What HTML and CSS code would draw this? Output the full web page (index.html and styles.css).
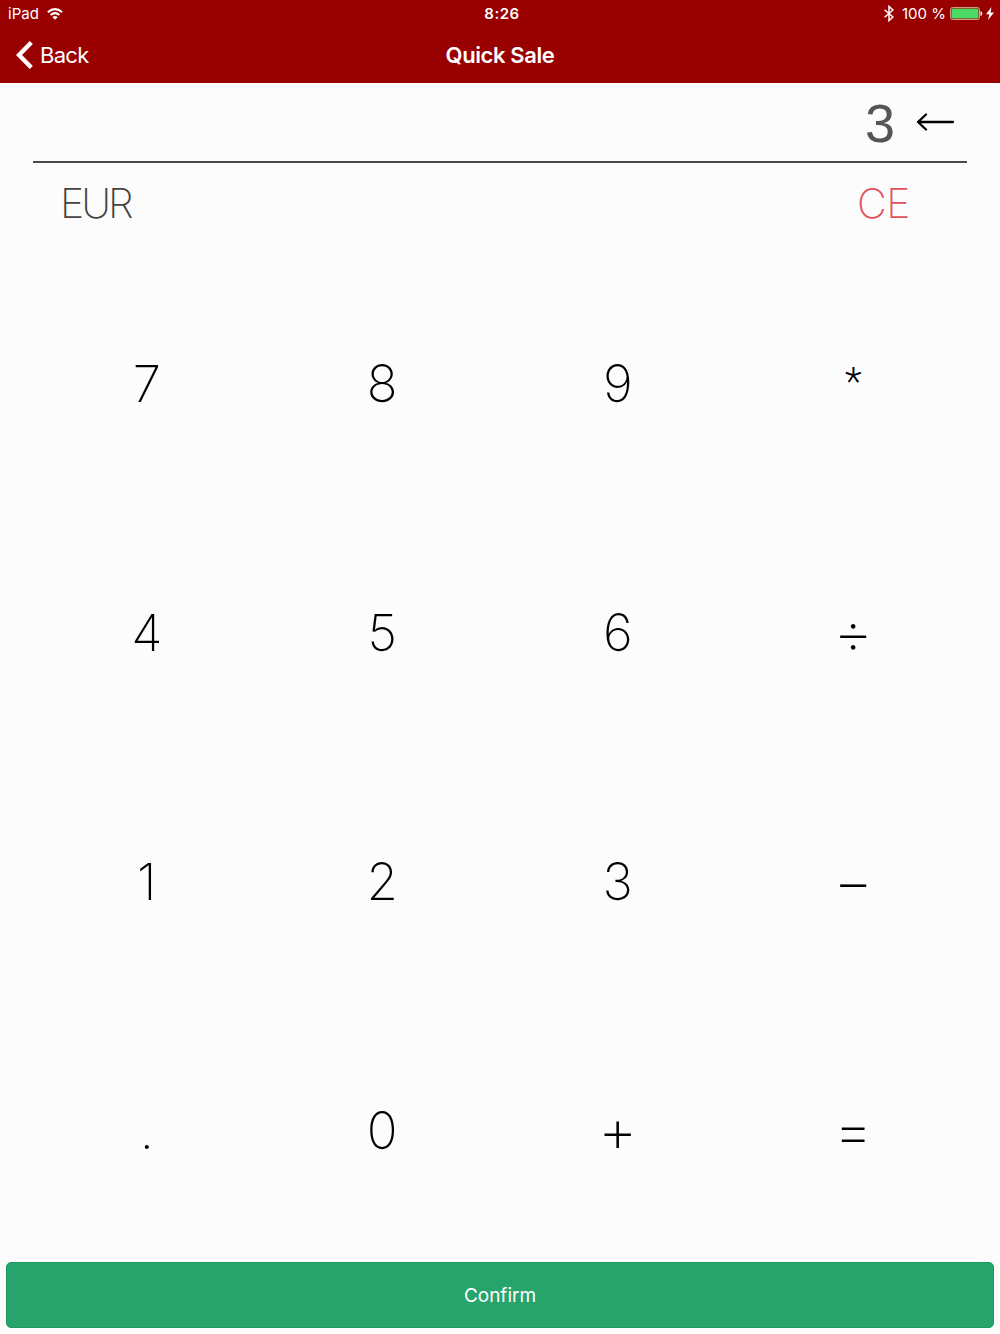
FILE: index.html
```
<!DOCTYPE html>
<html lang="en">
<head>
  <meta charset="UTF-8">
  <meta name="viewport" content="width=device-width, initial-scale=1.0">
  <title>Quick Sale</title>
  <link rel="stylesheet" href="styles.css">
</head>
<body>
  <header>
    <div class="status">
      <div class="status-left">
        <span class="device">iPad</span>
        <svg class="wifi" width="16" height="12" viewBox="0 0 16 12" fill="none" stroke="#fff" stroke-width="2">
          <path d="M0.8 4.3Q8-2 15.2 4.3"/>
          <path d="M3.6 7Q8 3.2 12.4 7"/>
          <path d="M8 11.8L5.4 9.2Q8 7 10.6 9.2Z" fill="#fff" stroke="none"/>
        </svg>
      </div>
      <div class="clock">8:26</div>
      <div class="status-right">
        <svg class="bluetooth" width="10" height="17" viewBox="0 0 10 17" fill="none" stroke="#fff" stroke-width="1.5">
          <path d="M0.6 4.7L9 12L5 15.6V1.4L9 5L0.6 12.3"/>
        </svg>
        <span class="percent">100 %</span>
        <svg class="battery" width="33" height="13" viewBox="0 0 33 13">
          <rect x="0.5" y="0.5" width="29" height="12" rx="2" fill="none" stroke="#d79a8a"/>
          <rect x="1.5" y="1.5" width="27" height="10" rx="1" fill="#4cd964"/>
          <path d="M30.5 4Q32.3 4.5 32.3 6.5T30.5 9Z" fill="#fff"/>
        </svg>
        <svg class="bolt" width="8" height="13" viewBox="0 0 8 13">
          <path d="M5.5 0L0 7.3H3.4L2 13L8 5.4H4.5Z" fill="#fff"/>
        </svg>
      </div>
    </div>
    <nav>
      <a class="back" href="#">
        <svg width="17" height="28" viewBox="0 0 17 28" fill="none" stroke="#fff" stroke-width="4.4">
          <path d="M15.3 1.5L3 14L15.3 26.5"/>
        </svg>
        <span>Back</span>
      </a>
      <h1>Quick Sale</h1>
    </nav>
  </header>

  <div class="display">
    <span class="amount">3</span>
    <svg class="erase" width="39" height="18" viewBox="0 0 39 18" fill="none" stroke="#000" stroke-width="2.3" stroke-linecap="round" stroke-linejoin="round">
      <path d="M37 9H2M10 1.5L2 9L10 16.5"/>
    </svg>
  </div>

  <div class="options">
    <span class="currency">EUR</span>
    <span class="clear">CE</span>
  </div>

  <div class="keypad">
    <div class="key">7</div>
    <div class="key">8</div>
    <div class="key">9</div>
    <div class="key star">*</div>
    <div class="key">4</div>
    <div class="key">5</div>
    <div class="key">6</div>
    <div class="key op">÷</div>
    <div class="key">1</div>
    <div class="key">2</div>
    <div class="key">3</div>
    <div class="key op">−</div>
    <div class="key">.</div>
    <div class="key">0</div>
    <div class="key op">+</div>
    <div class="key op">=</div>
  </div>

  <button class="confirm">Confirm</button>
</body>
</html>
```

FILE: styles.css
```
* {
  box-sizing: border-box;
}
body {
  margin: 0;
  height: 1334px;
  display: flex;
  flex-direction: column;
  font-family: Inter, "Liberation Sans", sans-serif;
  background-color: #fcfcfc;
  color: #000;
}
header {
  height: 83px;
  background-color: #990000;
  color: #fff;
}
.status {
  display: grid;
  grid-template-columns: 1fr auto 1fr;
  align-items: center;
  height: 27px;
  padding: 0 6px 0 8px;
  font-size: 15px;
}
.status-left,
.status-right {
  display: flex;
  align-items: center;
}
.status-right {
  justify-content: flex-end;
}
.wifi {
  margin-left: 8px;
}
.clock {
  padding-left: 2px;
  font-weight: 600;
  letter-spacing: 0.5px;
}
.percent {
  margin: 0 4px 0 8px;
}
.bolt {
  margin-left: 3px;
}
nav {
  display: grid;
  grid-template-columns: 1fr auto 1fr;
  align-items: center;
  height: 56px;
  padding: 0 16px;
}
.back {
  display: flex;
  align-items: center;
  gap: 7px;
  color: #fff;
  font-size: 22px;
  letter-spacing: -0.7px;
  text-decoration: none;
}
h1 {
  margin: 0;
  font-size: 22px;
  font-weight: 600;
  letter-spacing: -0.4px;
}
.display {
  display: flex;
  align-items: center;
  justify-content: flex-end;
  gap: 21px;
  height: 80px;
  margin: 0 33px;
  padding-right: 12px;
  border-bottom: 2px solid #4a4a4a;
}
.amount {
  padding-top: 1px;
  font-family: "Liberation Sans", Arial, sans-serif;
  font-size: 54px;
  color: #555;
}
.options {
  display: flex;
  justify-content: space-between;
  align-items: center;
  height: 80px;
  padding: 0 90px 0 60px;
  font-size: 41px;
  font-weight: 200;
}
.currency {
  color: #444;
  letter-spacing: -3px;
}
.clear {
  color: #e0525c;
  letter-spacing: -0.5px;
}
.keypad {
  display: grid;
  grid-template-columns: repeat(4, 1fr);
  grid-template-rows: repeat(4, 249px);
  margin: 16px 29px 0;
}
.key {
  display: flex;
  align-items: center;
  justify-content: center;
  font-size: 51px;
  font-weight: 200;
}
.star {
  padding-bottom: 4px;
  font-family: Roboto, sans-serif;
  font-size: 39px;
  font-weight: 300;
}
.op {
  padding-bottom: 1px;
  font-size: 61px;
}
.confirm {
  height: 66px;
  margin: 7px 6px 0;
  border: 1px solid #169b5c;
  border-radius: 5px;
  background-color: #27a36c;
  color: #fff;
  font-family: inherit;
  font-size: 19px;
}
```
